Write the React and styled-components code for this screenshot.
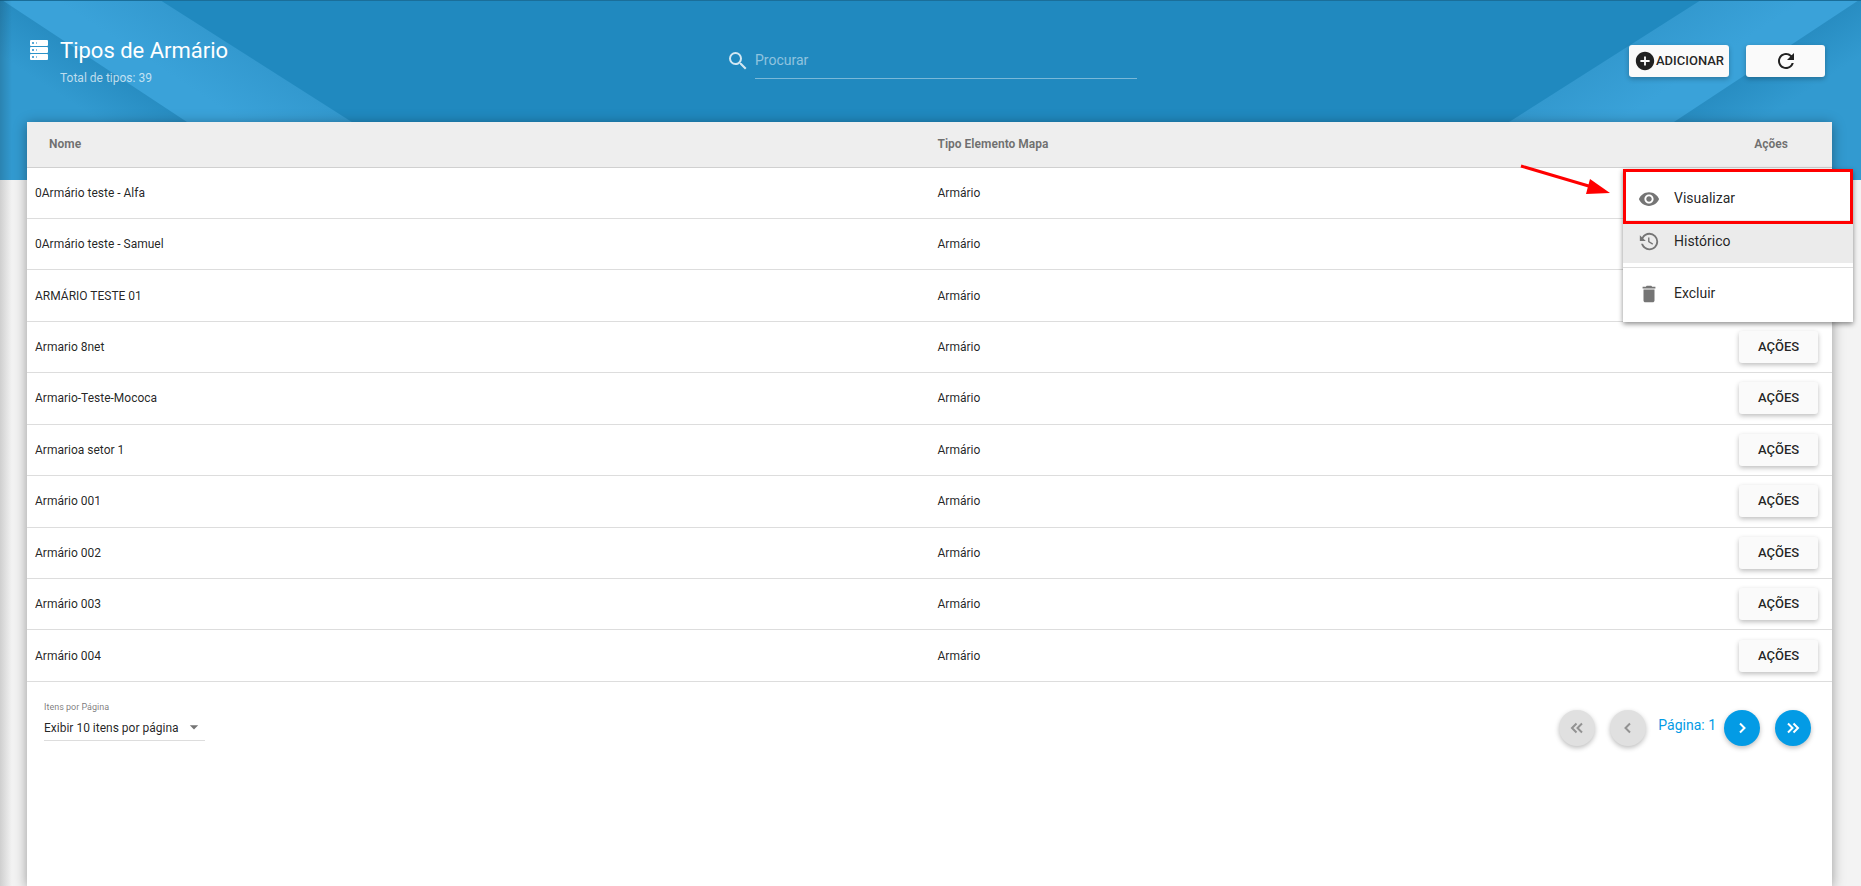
import React, { useState } from 'react';
import styled, { createGlobalStyle, css } from 'styled-components';
import {
  MdSearch,
  MdAddCircle,
  MdRefresh,
  MdVisibility,
  MdDelete,
  MdArrowDropDown,
} from 'react-icons/md';

const GlobalStyle = createGlobalStyle`
  *, *::before, *::after {
    box-sizing: border-box;
  }

  html, body, #root {
    height: 100%;
    margin: 0;
  }

  body {
    overflow: hidden;
    background: #f3f3f3;
    color: rgba(0, 0, 0, 0.87);
    font-family: Roboto, 'Liberation Sans', sans-serif;
    font-size: 14px;
  }

  button, input, select {
    font-family: inherit;
  }
`;

const Page = styled.div`
  position: relative;
  display: flex;
  flex-direction: column;
  height: 100%;

  &::after {
    content: '';
    position: absolute;
    inset: 0 auto 0 0;
    width: 12px;
    background: linear-gradient(to right, rgba(0, 0, 0, 0.15), rgba(0, 0, 0, 0));
    pointer-events: none;
  }
`;

const Banner = styled.header`
  position: relative;
  flex: none;
  height: 180px;
  overflow: hidden;
  background: #2089bf;
  border-top: 1px solid #1a6e99;
`;

const Ribbon = styled.svg`
  position: absolute;
  top: -1px;
  ${({ $side }) => ($side === 'right' ? 'right: 0;' : 'left: 0;')}
`;

const Toolbar = styled.div`
  position: relative;
  display: grid;
  grid-template-columns: 1fr 421px 1fr;
  align-items: start;
  padding: 32px 36px 0 28px;
  color: #fff;
`;

const Heading = styled.div`
  display: flex;
  gap: 10px;
  padding-top: 2px;

  svg {
    margin-top: 4px;
  }
`;

const Title = styled.h1`
  margin: 0;
  font-size: 22px;
  line-height: 32px;
  font-weight: 400;
`;

const Subtitle = styled.p`
  margin: 3px 0 0;
  font-size: 12px;
  line-height: 16px;
  color: rgba(255, 255, 255, 0.7);
`;

const SearchField = styled.label`
  display: flex;
  align-items: center;
  gap: 5px;
  padding: 10px 0 0 10px;
  color: rgba(255, 255, 255, 0.8);
`;

const SearchInput = styled.input`
  flex: 1;
  min-width: 0;
  height: 36px;
  padding: 0 0 2px;
  border: 0;
  border-bottom: 1px solid rgba(255, 255, 255, 0.4);
  outline: 0;
  background: transparent;
  color: #fff;
  font-size: 14px;

  &::placeholder {
    color: rgba(255, 255, 255, 0.5);
  }
`;

const ToolbarActions = styled.div`
  display: flex;
  justify-content: flex-end;
  gap: 17px;
  padding-top: 12px;
`;

const RaisedButton = styled.button`
  display: inline-flex;
  align-items: center;
  justify-content: center;
  width: ${({ $wide }) => ($wide ? '100px' : '79px')};
  height: 32px;
  padding: 0 0 1px;
  border: 0;
  border-radius: 3px;
  background: #fafafa;
  color: rgba(0, 0, 0, 0.87);
  box-shadow: 0 2px 5px rgba(0, 0, 0, 0.26);
  font-size: 13px;
  font-weight: 500;
  text-transform: uppercase;
  vertical-align: middle;
  cursor: pointer;
`;

const Card = styled.main`
  position: relative;
  flex: 1;
  margin: -58px 29px 0 27px;
  background: #fff;
  box-shadow: 0 2px 12px rgba(0, 0, 0, 0.38);
`;

const Table = styled.table`
  width: 100%;
  height: 560px;
  table-layout: fixed;
  border-collapse: collapse;
  font-size: 12px;
`;

const HeadCell = styled.th`
  height: 45px;
  padding: 0 8px 1px ${({ $indent }) => $indent || '8px'};
  border-bottom: 1px solid #d0d0d0;
  background: #eee;
  color: rgba(0, 0, 0, 0.54);
  font-weight: 700;
  text-align: ${({ $align }) => $align || 'left'};
`;

const Cell = styled.td`
  padding: 0 14px 0 8px;
  border-bottom: 1px solid #ddd;
  text-align: ${({ $align }) => $align || 'left'};
`;

const Menu = styled.div`
  position: absolute;
  top: 47px;
  right: -21px;
  display: flex;
  flex-direction: column;
  width: 230px;
  padding: 8px 0 7px;
  background: #fff;
  box-shadow: 0 2px 5px rgba(0, 0, 0, 0.45);
`;

const MenuItem = styled.button`
  display: flex;
  align-items: center;
  gap: 14px;
  height: 43px;
  padding: 0 15px 2px;
  border: 0;
  background: ${({ $active }) => ($active ? '#ebebeb' : 'transparent')};
  color: rgba(0, 0, 0, 0.87);
  font-size: 14px;
  text-align: left;
  cursor: pointer;

  svg {
    margin-top: 3px;
    color: #757575;
  }
`;

const MenuDivider = styled.hr`
  width: 100%;
  margin: 4px 0;
  border: 0;
  border-top: 1px solid #ddd;
`;

const Highlight = styled.div`
  position: absolute;
  top: 0;
  left: 0;
  right: 0;
  height: 55px;
  border: 3px solid #f00;
  pointer-events: none;
`;

const Arrow = styled.svg`
  position: absolute;
  top: -8px;
  right: 240px;
  pointer-events: none;
`;

const Footer = styled.footer`
  display: flex;
  justify-content: space-between;
  align-items: flex-start;
  padding: 19px 21px 0 17px;
`;

const PageSize = styled.div`
  position: relative;
  display: flex;
  flex-direction: column;
  width: 161px;

  label {
    font-size: 9px;
    line-height: 12px;
    color: rgba(0, 0, 0, 0.54);
  }

  select {
    height: 28px;
    padding: 3px 0 0;
    border: 0;
    border-bottom: 1px solid #ddd;
    outline: 0;
    appearance: none;
    background: transparent;
    color: rgba(0, 0, 0, 0.87);
    font-size: 12px;
  }

  svg {
    position: absolute;
    right: 1px;
    bottom: 4px;
    color: #757575;
    pointer-events: none;
  }
`;

const Pager = styled.nav`
  display: flex;
  gap: 15px;
  padding-top: 9px;
`;

const PagerGroup = styled.div`
  display: flex;
  gap: ${({ $gap }) => $gap};
`;

const PageLabel = styled.span`
  font-size: 14px;
  line-height: 30px;
  color: #039be5;
`;

const RoundButton = styled.button`
  display: flex;
  align-items: center;
  justify-content: center;
  width: 36px;
  height: 36px;
  padding: 0;
  border: 0;
  border-radius: 50%;
  background: #039be5;
  color: #fff;
  box-shadow: 0 2px 5px rgba(0, 0, 0, 0.26);
  cursor: pointer;

  ${({ disabled }) =>
    disabled &&
    css`
      background: #e0e0e0;
      color: #929292;
      cursor: default;
    `}
`;

const names = [
  '0Armário teste - Alfa',
  '0Armário teste - Samuel',
  'ARMÁRIO TESTE 01',
  'Armario 8net',
  'Armario-Teste-Mococa',
  'Armarioa setor 1',
  'Armário 001',
  'Armário 002',
  'Armário 003',
  'Armário 004',
];

const ServerIcon = () => (
  <svg width="22" height="22" viewBox="0 0 22 22" aria-hidden="true">
    {[1, 8, 15].map((y) => (
      <g key={y}>
        <rect x="2" y={y} width="18" height="6" rx="1" fill="#fff" />
        <rect x="4" y={y + 2} width="2" height="2" fill="#5aa9d6" />
        <rect x="8" y={y + 2} width="1" height="2" fill="#8cc4e4" />
      </g>
    ))}
  </svg>
);

const HistoryIcon = () => (
  <svg width="22" height="22" viewBox="0 0 24 24" fill="currentColor" aria-hidden="true">
    <path d="M11 7V12.11L15.71 14.9L16.5 13.62L12.5 11.25V7M12.5 2C8.97 2 5.91 3.92 4.27 6.77L2 4.5V11H8.5L5.75 8.25C6.96 5.73 9.5 4 12.5 4A7.5 7.5 0 0 1 20 11.5A7.5 7.5 0 0 1 12.5 19C9.23 19 6.47 16.91 5.44 14H3.34C4.44 18.03 8.11 21 12.5 21C17.74 21 22 16.75 22 11.5A9.5 9.5 0 0 0 12.5 2Z" />
  </svg>
);

const BannerRibbon = ({ side }) => (
  <Ribbon $side={side} width="445" height="180" viewBox="0 0 445 180" aria-hidden="true">
    <defs>
      <linearGradient
        id={`band-${side}`}
        gradientUnits="userSpaceOnUse"
        x1="256"
        y1="61"
        x2="224"
        y2="110"
      >
        <stop offset="0" stopColor="#3399cf" />
        <stop offset="1" stopColor="#3aa2d9" />
      </linearGradient>
      <linearGradient
        id={`corner-${side}`}
        gradientUnits="userSpaceOnUse"
        x1="95"
        y1="61"
        x2="69"
        y2="101"
      >
        <stop offset="0" stopColor="#288dc2" />
        <stop offset="1" stopColor="#329ad0" />
      </linearGradient>
    </defs>
    <g transform={side === 'right' ? 'translate(445 0) scale(-1 1)' : undefined}>
      <path d="M0 0H160L443 180H0Z" fill={`url(#band-${side})`} />
      <path d="M0 0H2L275 180H0Z" fill={`url(#corner-${side})`} />
    </g>
  </Ribbon>
);

const Chevron = ({ double, left }) => (
  <svg width="18" height="18" viewBox="0 0 18 18" fill="none" aria-hidden="true">
    <path
      d={double ? 'M4 4.5L8.5 9L4 13.5M9.5 4.5L14 9L9.5 13.5' : 'M7 4.5L11.5 9L7 13.5'}
      transform={left ? 'translate(18 0) scale(-1 1)' : undefined}
      stroke="currentColor"
      strokeWidth="2"
    />
  </svg>
);

const ActionsMenu = () => (
  <Menu>
    <MenuItem>
      <MdVisibility size={22} />
      Visualizar
    </MenuItem>
    <MenuItem $active>
      <HistoryIcon />
      Histórico
    </MenuItem>
    <MenuDivider />
    <MenuItem>
      <MdDelete size={22} />
      Excluir
    </MenuItem>
    <Highlight />
    <Arrow width="96" height="36" viewBox="0 0 96 36" aria-hidden="true">
      <path d="M4 5L75 26" stroke="#f00" strokeWidth="3" />
      <path d="M73 18L93 32L69 33Z" fill="#f00" />
    </Arrow>
  </Menu>
);

const App = () => {
  const [search, setSearch] = useState('');
  const [pageSize, setPageSize] = useState('10');

  return (
    <Page>
      <GlobalStyle />
      <Banner>
        <BannerRibbon side="left" />
        <BannerRibbon side="right" />
        <Toolbar>
          <Heading>
            <ServerIcon />
            <div>
              <Title>Tipos de Armário</Title>
              <Subtitle>Total de tipos: 39</Subtitle>
            </div>
          </Heading>
          <SearchField>
            <MdSearch size={24} />
            <SearchInput
              aria-label="Procurar"
              placeholder="Procurar"
              value={search}
              onChange={(e) => setSearch(e.target.value)}
            />
          </SearchField>
          <ToolbarActions>
            <RaisedButton $wide>
              <MdAddCircle size={22} />
              Adicionar
            </RaisedButton>
            <RaisedButton aria-label="Atualizar">
              <MdRefresh size={24} />
            </RaisedButton>
          </ToolbarActions>
        </Toolbar>
      </Banner>
      <Card>
        <Table>
          <colgroup>
            <col style={{ width: '50%' }} />
            <col />
            <col style={{ width: '122px' }} />
          </colgroup>
          <thead>
            <tr>
              <HeadCell $indent="22px">Nome</HeadCell>
              <HeadCell>Tipo Elemento Mapa</HeadCell>
              <HeadCell $align="center">Ações</HeadCell>
            </tr>
          </thead>
          <tbody>
            {names.map((name) => (
              <tr key={name}>
                <Cell>{name}</Cell>
                <Cell>Armário</Cell>
                <Cell $align="right">
                  <RaisedButton>Ações</RaisedButton>
                </Cell>
              </tr>
            ))}
          </tbody>
        </Table>
        <Footer>
          <PageSize>
            <label htmlFor="page-size">Itens por Página</label>
            <select id="page-size" value={pageSize} onChange={(e) => setPageSize(e.target.value)}>
              <option value="10">Exibir 10 itens por página</option>
              <option value="25">Exibir 25 itens por página</option>
              <option value="50">Exibir 50 itens por página</option>
            </select>
            <MdArrowDropDown size={20} />
          </PageSize>
          <Pager aria-label="Paginação">
            <RoundButton disabled aria-label="Primeira página">
              <Chevron double left />
            </RoundButton>
            <PagerGroup $gap="12px">
              <RoundButton disabled aria-label="Página anterior">
                <Chevron left />
              </RoundButton>
              <PagerGroup $gap="8px">
                <PageLabel>Página: 1</PageLabel>
                <RoundButton aria-label="Próxima página">
                  <Chevron />
                </RoundButton>
              </PagerGroup>
            </PagerGroup>
            <RoundButton aria-label="Última página">
              <Chevron double />
            </RoundButton>
          </Pager>
        </Footer>
        <ActionsMenu />
      </Card>
    </Page>
  );
};

export default App;
